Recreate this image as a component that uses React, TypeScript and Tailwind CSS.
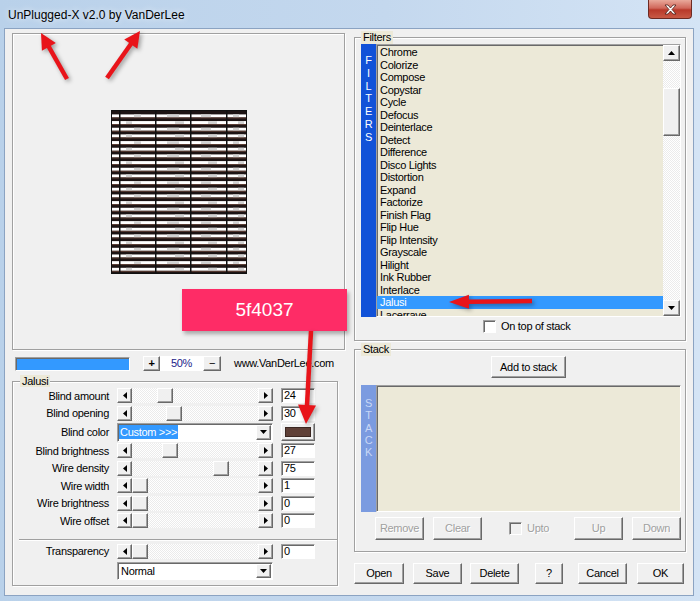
import React from 'react';

const FILTERS = [
  'Chrome', 'Colorize', 'Compose', 'Copystar', 'Cycle', 'Defocus', 'Deinterlace', 'Detect',
  'Difference', 'Disco Lights', 'Distortion', 'Expand', 'Factorize', 'Finish Flag', 'Flip Hue',
  'Flip Intensity', 'Grayscale', 'Hilight', 'Ink Rubber', 'Interlace', 'Jalusi', 'Lacerrave',
];

const RAISED =
  'bg-[#f0f0f0] border border-t-white border-l-white border-r-[#696969] border-b-[#696969] shadow-[inset_-1px_-1px_0_#a0a0a0]';
const SUNKEN =
  'border border-t-[#a0a0a0] border-l-[#a0a0a0] border-r-white border-b-white shadow-[inset_1px_1px_0_#696969]';
const ETCHED = 'border border-[#a0a0a0] shadow-[1px_1px_0_#fff,inset_1px_1px_0_#fff]';
const DISABLED = 'text-[#a0a0a0] [text-shadow:1px_1px_0_#fff]';

const ROWS = [
  { label: 'Blind amount', value: '24', thumb: 'ml-[25px]' },
  { label: 'Blind opening', value: '30', thumb: 'ml-[34px]' },
  { label: 'Blind color', value: '', thumb: '' },
  { label: 'Blind brightness', value: '27', thumb: 'ml-[30px]' },
  { label: 'Wire density', value: '75', thumb: 'ml-[81px]' },
  { label: 'Wire width', value: '1', thumb: 'ml-0' },
  { label: 'Wire brightness', value: '0', thumb: 'ml-0' },
  { label: 'Wire offset', value: '0', thumb: 'ml-0' },
];

function Tri({ dir }: { dir: 'left' | 'right' | 'up' | 'down' }) {
  const horiz = dir === 'left' || dir === 'right';
  const d = {
    left: 'M4 0v7L0 3.5z',
    right: 'M0 0v7l4-3.5z',
    up: 'M0 4h7L3.5 0z',
    down: 'M0 0h7L3.5 4z',
  }[dir];
  return (
    <svg width={horiz ? 4 : 7} height={horiz ? 7 : 4} viewBox={horiz ? '0 0 4 7' : '0 0 7 4'}>
      <path d={d} fill="#000" />
    </svg>
  );
}

function ArrowBtn({ dir, cls = 'w-[15px] h-full' }: { dir: 'left' | 'right' | 'up' | 'down'; cls?: string }) {
  return (
    <div className={`${RAISED} ${cls} flex items-center justify-center shrink-0`}>
      <Tri dir={dir} />
    </div>
  );
}

function ScrollBar({ thumb }: { thumb: string }) {
  return (
    <div className="flex h-[15px] w-[156px]">
      <ArrowBtn dir="left" />
      <div className="flex-1 flex bg-[repeating-conic-gradient(#fff_0_25%,#ebebeb_0_50%)] bg-[length:2px_2px]">
        <div className={`${thumb} ${RAISED} w-[16px] h-full`} />
      </div>
      <ArrowBtn dir="right" />
    </div>
  );
}

function Field({ value }: { value: string }) {
  return (
    <div className={`${SUNKEN} bg-white w-[34px] h-[15px] ml-[8px] pl-[2px] leading-[12px]`}>{value}</div>
  );
}

function Button({ label, cls, disabled }: { label: string; cls: string; disabled?: boolean }) {
  return (
    <div className={`${RAISED} ${cls} flex items-center justify-center shrink-0 ${disabled ? DISABLED : 'text-black'}`}>
      {label}
    </div>
  );
}

function Preview() {
  const rows = Array.from({ length: 24 }, (_, i) => i);
  const grayA = [[23, 7], [56, 12], [90, 10], [122, 6]];
  const grayB = [[15, 6], [64, 9], [97, 9], [127, 6]];
  return (
    <svg width="136" height="164" viewBox="0 0 136 164">
      <rect width="136" height="164" fill="#1d1414" />
      {rows.map((i) => {
        const y = 4.4 + i * 6.67;
        const grays = i % 2 === 0 ? grayA : grayB;
        return (
          <g key={i}>
            <rect x="0" y={y} width="136" height="3" fill="#fff" />
            {grays.map(([x, w]) => (
              <rect key={x} x={x} y={y} width={w} height="3" fill="#d2d2d2" />
            ))}
            <rect x="0" y={y + 3} width="136" height="1" fill="#5f4037" />
          </g>
        );
      })}
      {[8, 44, 79, 115].map((x) => (
        <rect key={x} x={x} y="0" width="1.5" height="164" fill="#111" />
      ))}
      <rect x="0.5" y="0.5" width="135" height="163" fill="none" stroke="#111" />
    </svg>
  );
}

function Arrow({ x1, y1, x2, y2, L = 16, W = 8 }: { x1: number; y1: number; x2: number; y2: number; L?: number; W?: number }) {
  const dx = x2 - x1;
  const dy = y2 - y1;
  const len = Math.hypot(dx, dy);
  const ux = dx / len;
  const uy = dy / len;
  const bx = x2 - ux * L;
  const by = y2 - uy * L;
  const nx = -uy;
  const ny = ux;
  const pts = `${x2},${y2} ${bx + nx * W},${by + ny * W} ${bx - nx * W},${by - ny * W}`;
  return (
    <g>
      <line x1={x1} y1={y1} x2={bx + ux * 2} y2={by + uy * 2} stroke="#e8141a" strokeWidth={4.5} />
      <polygon points={pts} fill="#e8141a" />
    </g>
  );
}

export default function App() {
  return (
    <div className="relative w-[700px] h-[601px] overflow-hidden bg-[linear-gradient(90deg,#b9d1ea,#c4d8ee_55%,#d4e4f5)] font-['Liberation_Sans',Arial,sans-serif] text-[11px] tracking-[-0.3px] text-black">
      {/* title bar */}
      <div className="flex justify-between items-start h-[28px]">
        <div className="pl-[8px] pt-[7px] text-[12px] tracking-normal leading-[16px] [text-shadow:0_0_6px_#fff]">
          UnPlugged-X v2.0 by VanDerLee
        </div>
        <div className="mr-[8px] w-[44px] h-[19px] rounded-b-[4px] border border-t-0 border-[#6d2a22] bg-[linear-gradient(180deg,#e9a99b,#d0675a_45%,#b8392a_55%,#c85a45)] flex items-center justify-center">
          <svg width="13" height="11" viewBox="0 0 13 11">
            <path d="M1 1h3l2.5 3 2.5-3h3l-4 4.5 4 4.5h-3l-2.5-3-2.5 3h-3l4-4.5z" fill="#fff" stroke="#4a1d16" strokeWidth="0.8" />
          </svg>
        </div>
      </div>

      {/* client area */}
      <div className="ml-[4px] w-[690px] h-[568px] bg-[#f0f0f0] border border-[#8ba3c2] flex pl-[7px] pr-[7px]">
        {/* left column */}
        <div className="w-[334px] flex flex-col pt-[4px]">
          <div className={`${ETCHED} w-[333px] h-[317px] flex items-center justify-center`}>
            <Preview />
          </div>

          <div className="mt-[6px] h-[15px] flex items-center">
            <div className={`${SUNKEN} ml-[3px] w-[115px] h-[14px] bg-[#3399ff]`} />
            <Button label="+" cls="ml-[13px] w-[17px] h-[15px] font-bold" />
            <div className="w-[43px] h-[15px] bg-white text-center leading-[15px] text-[#1c1c8a]">50%</div>
            <Button label="−" cls="w-[18px] h-[15px]" />
            <div className="ml-[13px]">www.VanDerLee.com</div>
          </div>

          <fieldset className={`${ETCHED} mt-[4px] w-[326px] h-[211px] pl-[7px]`}>
            <legend className="px-[2px] bg-[#ece9d8] leading-[12px]">Jalusi</legend>
            {ROWS.map((r) =>
              r.label === 'Blind color' ? (
                <div key={r.label} className="flex items-center h-[20px]">
                  <div className="w-[89px] text-right">{r.label}</div>
                  <div className={`${SUNKEN} ml-[8px] bg-white w-[156px] h-[19px] flex items-center justify-between p-[1px]`}>
                    <span className="bg-[#3399ff] text-white px-[1px] leading-[14px]">Custom &gt;&gt;&gt;</span>
                    <ArrowBtn dir="down" cls="w-[15px] h-[15px]" />
                  </div>
                  <div className={`${RAISED} ml-[8px] w-[34px] h-[18px] p-[3px]`}>
                    <div className="w-full h-full bg-[#5f4037] border border-[#3b2722]" />
                  </div>
                </div>
              ) : (
                <div key={r.label} className="flex items-center h-[17.5px]">
                  <div className="w-[89px] text-right">{r.label}</div>
                  <div className="ml-[8px]">
                    <ScrollBar thumb={r.thumb} />
                  </div>
                  <Field value={r.value} />
                </div>
              ),
            )}
            <div className="mt-[9.5px] -ml-[1px] h-[2px] border-t border-t-[#a0a0a0] border-b border-b-white" />
            <div className="mt-[2px] flex items-center h-[17px]">
              <div className="w-[89px] text-right">Transparency</div>
              <div className="ml-[8px]">
                <ScrollBar thumb="ml-0" />
              </div>
              <Field value="0" />
            </div>
            <div className={`${SUNKEN} mt-[2px] ml-[97px] bg-white w-[156px] h-[18px] flex items-center justify-between p-[1px]`}>
              <span className="pl-[2px]">Normal</span>
              <ArrowBtn dir="down" cls="w-[15px] h-[14px]" />
            </div>
          </fieldset>
        </div>

        {/* right column */}
        <div className="ml-[8px] w-[332px] flex flex-col">
          <fieldset className={`${ETCHED} mt-[2px] h-[310px] pl-[6px] pr-[4px]`}>
            <legend className="px-[2px] bg-[#ece9d8] leading-[13px]">Filters</legend>
            <div className="flex h-[273px]">
              <div className="w-[15px] bg-[#1152d8] text-white flex flex-col items-center pt-[10px] leading-[12.8px]">
                {'FILTERS'.split('').map((c, i) => (
                  <span key={i}>{c}</span>
                ))}
              </div>
              <div className={`${SUNKEN} flex-1 flex bg-[#ece9d8]`}>
                <div className="flex-1 overflow-hidden pt-[1px]">
                  {FILTERS.map((f) => (
                    <div
                      key={f}
                      className={`h-[12.5px] leading-[12.5px] pl-[3px] ${f === 'Jalusi' ? 'bg-[#3399ff] text-white' : ''}`}
                    >
                      {f}
                    </div>
                  ))}
                </div>
                <div className="w-[17px] flex flex-col bg-[repeating-conic-gradient(#fff_0_25%,#ebebeb_0_50%)] bg-[length:2px_2px]">
                  <ArrowBtn dir="up" cls="w-[17px] h-[16px]" />
                  <div className="h-[27px]" />
                  <div className={`${RAISED} h-[48px]`} />
                  <div className="flex-1" />
                  <ArrowBtn dir="down" cls="w-[17px] h-[16px]" />
                </div>
              </div>
            </div>
            <div className="mt-[3px] h-[13px] flex items-center">
              <div className={`${SUNKEN} ml-[122px] w-[13px] h-[13px] bg-white`} />
              <span className="ml-[5px]">On top of stack</span>
            </div>
          </fieldset>

          <fieldset className={`${ETCHED} mt-[2px] h-[209px] pl-[6px] pr-[4px]`}>
            <legend className="px-[2px] bg-[#ece9d8] leading-[13px]">Stack</legend>
            <Button label="Add to stack" cls="ml-[130px] w-[75px] h-[22px]" />
            <div className="mt-[7px] flex h-[127px]">
              <div className="w-[15px] bg-[#7b9be0] text-[#c8d7f6] flex flex-col items-center pt-[12px] leading-[12.3px]">
                {'STACK'.split('').map((c, i) => (
                  <span key={i}>{c}</span>
                ))}
              </div>
              <div className={`${SUNKEN} flex-1 bg-[#ece9d8]`} />
            </div>
            <div className="mt-[5px] h-[23px] flex items-center">
              <Button label="Remove" cls="ml-[14px] w-[49px] h-[23px]" disabled />
              <Button label="Clear" cls="ml-[9px] w-[49px] h-[23px]" disabled />
              <div className={`${SUNKEN} ml-[27px] w-[13px] h-[13px] bg-[#f0f0f0]`} />
              <span className={`ml-[5px] ${DISABLED}`}>Upto</span>
              <Button label="Up" cls="ml-auto w-[49px] h-[23px]" disabled />
              <Button label="Down" cls="ml-[9px] w-[49px] h-[23px]" disabled />
            </div>
          </fieldset>

          <div className="mt-[11px] h-[21px] flex">
            <Button label="Open" cls="w-[50px] h-[21px]" />
            <Button label="Save" cls="ml-[9px] w-[49px] h-[21px]" />
            <Button label="Delete" cls="ml-[8px] w-[49px] h-[21px]" />
            <Button label="?" cls="ml-[16px] w-[28px] h-[21px]" />
            <Button label="Cancel" cls="ml-[15px] w-[49px] h-[21px]" />
            <Button label="OK" cls="ml-[10px] w-[47px] h-[21px]" />
          </div>
        </div>
      </div>

      {/* annotations over the screenshot */}
      <div className="absolute left-[182px] top-[289px] w-[165px] h-[42px] bg-[#fe2c66] shadow-[2px_3px_4px_rgba(0,0,0,0.3)] flex items-center justify-center text-white text-[19px] tracking-normal">
        5f4037
      </div>
      <svg className="absolute inset-0 pointer-events-none drop-shadow-[2px_2px_2px_rgba(0,0,0,0.35)]" width="700" height="601">
        <Arrow x1={67} y1={79} x2={41} y2={33} />
        <Arrow x1={107} y1={78} x2={140} y2={31} />
        <Arrow x1={532} y1={301} x2={449} y2={302} L={20} W={7} />
        <Arrow x1={311} y1={331} x2={306} y2={424} L={19} W={9} />
      </svg>
    </div>
  );
}
